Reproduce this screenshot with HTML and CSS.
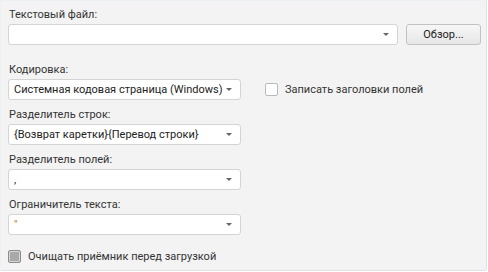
FILE: index.html
```html
<!DOCTYPE html>
<html lang="ru">
<head>
  <meta charset="UTF-8" />
  <title>Импорт текстового файла</title>
  <link rel="stylesheet" href="styles.css">
</head>
<body>

  <div class="panel">
    <div class="field first">
      <div class="label">Текстовый файл:</div>
      <div class="row">
        <div class="combo wide"><span class="value"></span><span class="arrow"></span></div>
        <button class="browse">Обзор...</button>
      </div>
    </div>

    <div class="field encoding">
      <div class="label">Кодировка:</div>
      <div class="row">
        <div class="combo"><span class="value">Системная кодовая страница (Windows)</span><span class="arrow"></span></div>
        <label class="check side"><span class="box"></span>Записать заголовки полей</label>
      </div>
    </div>

    <div class="field">
      <div class="label">Разделитель строк:</div>
      <div class="combo"><span class="value">{Возврат каретки}{Перевод строки}</span><span class="arrow"></span></div>
    </div>

    <div class="field">
      <div class="label">Разделитель полей:</div>
      <div class="combo"><span class="value">,</span><span class="arrow"></span></div>
    </div>

    <div class="field">
      <div class="label">Ограничитель текста:</div>
      <div class="combo"><span class="value quote">"</span><span class="arrow"></span></div>
    </div>

    <label class="check bottom"><span class="box checked"></span>Очищать приёмник перед загрузкой</label>
  </div>

</body>
</html>
```

FILE: styles.css
```css
body {
  margin: 0;
  background: #fff;
  font-family: Roboto, "Noto Sans", sans-serif;
  font-size: 11px;
  color: #333;
}

.panel {
  width: 478px;
  height: 269px;
  background: #f3f3f3;
  border: 1px solid #dde3e9;
  border-top-color: #eef1f3;
  border-left-color: #eef1f3;
  border-radius: 0 0 3px 0;
  padding: 0 0 0 7px;
  display: flex;
  flex-direction: column;
}

.field {
  display: flex;
  flex-direction: column;
  margin-top: 7px;
}

.field.first {
  margin-top: 6px;
}

.field.encoding {
  margin-top: 17px;
}

.label {
  height: 16px;
  line-height: 16px;
  margin-bottom: 1px;
  padding-left: 1px;
}

.row {
  display: flex;
  align-items: center;
}

.combo {
  width: 220px;
  height: 19px;
  background: #fff;
  border: 1px solid #d4d4d4;
  border-radius: 3px;
  display: flex;
  align-items: center;
  padding: 0 6px 0 5px;
  overflow: hidden;
}

.combo.wide {
  width: 377px;
}

.value {
  flex: 1;
  white-space: nowrap;
  overflow: hidden;
  color: #222;
}

.value.quote {
  color: #c87a1e;
}

.arrow {
  width: 0;
  height: 0;
  border-left: 3px solid transparent;
  border-right: 3px solid transparent;
  border-top: 3px solid #666;
  margin-right: 2px;
}

.browse {
  margin-left: 8px;
  width: 75px;
  height: 21px;
  border: 1px solid #c2c2c2;
  border-radius: 3px;
  background: linear-gradient(#f7f7f7, #e6e6e6);
  font-family: inherit;
  font-size: 11px;
  color: #222;
  padding: 0;
}

.check {
  display: flex;
  align-items: center;
  gap: 7px;
  color: #333;
}

.check.side {
  margin-left: 24px;
}

.check.bottom {
  margin-top: 15px;
}

.box {
  width: 11px;
  height: 11px;
  border: 1px solid #b9b9b9;
  border-radius: 2px;
  background: #fff;
}

.box.checked {
  border-color: #8c8c8c;
  background: #a9a9a9;
  box-shadow: inset 0 0 0 1px #d6d6d6;
}
```
